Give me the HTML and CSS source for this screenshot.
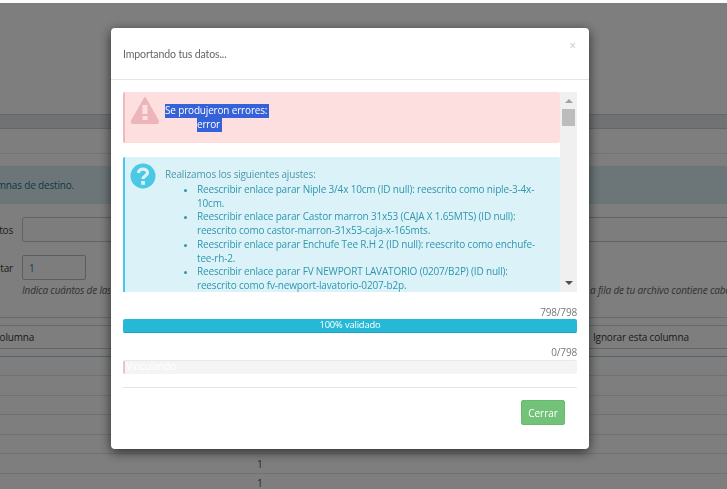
FILE: index.html
```html
<!DOCTYPE html>
<html lang="es">
<head>
<meta charset="utf-8">
<title>Importando tus datos</title>
<link rel="stylesheet" href="styles.css">
</head>
<body>
<main class="page">
  <div class="band"></div>
  <div class="plain"></div>
  <div class="notice"><span class="notice-text">columnas de destino.</span></div>
  <div class="field"><label class="field-label">tos</label><div class="input input-wide"></div></div>
  <div class="field"><label class="field-label">tar</label><div class="input input-small">1</div></div>
  <div class="hint"><em class="hint-left">Indica cuántos de las</em><em class="hint-right">a fila de tu archivo contiene cabeceras</em></div>
  <div class="table-head"><span class="head-left">columna</span><span class="head-right">Ignorar esta columna</span></div>
  <div class="row"></div>
  <div class="row"></div>
  <div class="row"></div>
  <div class="row"></div>
  <div class="row"></div>
  <div class="row row-num"><span>1</span></div>
  <div class="row row-num row-last"><span>1</span></div>
</main>
<div class="overlay">
  <section class="modal">
    <header class="modal-header">
      <h1 class="modal-title">Importando tus datos...</h1>
      <span class="close">×</span>
    </header>
    <div class="modal-body">
      <div class="scroller">
        <div class="messages">
          <div class="alert alert-danger">
            <svg class="icon-warn" width="30" height="28" viewBox="0 0 30 28"><path d="M15 2 L28 25 Q28.500 27 27 27 L3 27 Q1.500 27 2 25 Z" fill="#edb5b9" stroke="#edb5b9" stroke-width="2" stroke-linejoin="round"/><rect x="12.500" y="9" width="5" height="9" fill="#fddfe0"/><rect x="12.500" y="20" width="5" height="4" fill="#fddfe0"/></svg>
            <div class="alert-text">
              <span class="selected">Se produjeron errores:</span>
              <ul class="error-list"><li><span class="selected">error</span></li></ul>
            </div>
          </div>
          <div class="alert alert-info">
            <svg class="icon-help" width="26" height="26" viewBox="0 0 26 26"><circle cx="13" cy="13" r="12.500" fill="#4bc8e6"/><path d="M8.500 10 C8.500 4.800 17.500 5 17.500 9.800 C17.500 13 13 12.800 13 16" fill="none" stroke="#dcf2f9" stroke-width="3.200"/><rect x="11.200" y="18" width="3.800" height="3.800" fill="#dcf2f9"/></svg>
            <div class="alert-text">
              <p class="info-title">Realizamos los siguientes ajustes:</p>
              <ul class="info-list">
                <li>Reescribir enlace parar Niple 3/4x 10cm (ID null): reescrito como niple-3-4x-10cm.</li>
                <li>Reescribir enlace parar Castor marron 31x53 (CAJA X 1.65MTS) (ID null): reescrito como castor-marron-31x53-caja-x-165mts.</li>
                <li>Reescribir enlace parar Enchufe Tee R.H 2 (ID null): reescrito como enchufe-tee-rh-2.</li>
                <li>Reescribir enlace parar FV NEWPORT LAVATORIO (0207/B2P) (ID null): reescrito como fv-newport-lavatorio-0207-b2p.</li>
              </ul>
            </div>
          </div>
        </div>
        <div class="scrollbar">
          <span class="arrow-up"></span>
          <span class="thumb"></span>
          <span class="arrow-down"></span>
        </div>
      </div>
      <div class="count count-first">798/798</div>
      <div class="progress"><div class="progress-fill">100% validado</div></div>
      <div class="count count-second">0/798</div>
      <div class="progress progress-empty"><div class="progress-start"></div><span class="progress-label">Vinculando</span></div>
      <hr class="rule">
      <div class="actions"><button class="btn" type="button">Cerrar</button></div>
    </div>
  </section>
</div>
</body>
</html>
```
FILE: styles.css
```css
* { box-sizing: border-box; }
html, body { margin: 0; height: 100%; overflow: hidden; }
body { background: #fcfcfc; font-family: "Open Sans", sans-serif; font-size: 10px; letter-spacing: -.17px; color: #363a41; }

.page { height: 489px; padding-top: 114px; overflow: hidden; }
.band { height: 15px; background: #e0e5e8; border-top: 1px solid #c8cdd0; border-bottom: 1px solid #c8cdd0; }
.plain { height: 25px; border-bottom: 1px solid #e6e6e6; }
.notice { height: 38px; margin-top: 12px; background: #d9edf3; display: flex; align-items: center; overflow: hidden; }
.notice-text { margin-left: -22px; white-space: nowrap; color: #2a6f85; }
.field { height: 25px; margin-top: 13px; display: flex; overflow: hidden; }
.field-label { width: 22px; flex: none; display: flex; justify-content: flex-end; padding-right: 9px; align-items: center; white-space: nowrap; }
.input { height: 25px; border: 1px solid #c6c6c6; border-radius: 2px; padding: 0 6px; display: flex; align-items: center; background: #fbfbfb; color: #4c6f8a; }
.input-wide { flex: 1; margin-right: -4px; }
.input-small { width: 64px; border-color: #bbb; }
.hint { height: 37px; display: flex; color: #666; white-space: nowrap; overflow: hidden; padding-top: 3px; }
.hint-left { margin-left: 22px; width: 88px; flex: none; overflow: hidden; }
.hint-right { margin-left: 480px; }
.table-head { height: 32px; border-top: 1px solid #d4d4d4; display: flex; align-items: center; border-bottom: 1px solid #c9c9c9; box-shadow: inset 0 7px 0 #fcfcfc, inset 0 8px 0 #d2d2d2; padding-top: 8px; overflow: hidden; }
.head-left { margin-left: -5px; width: 598px; flex: none; }
.head-right { white-space: nowrap; }
.row { height: 19.600px; border-bottom: 1px solid #e2e2e2; }
.table-head + .row { height: 20px; border-top: 1px solid #a4c8dc; margin-top: 7px; }
.row-num { display: flex; align-items: center; padding-left: 257px; color: #1b5f8a; }

.overlay { position: fixed; left: 0; right: 0; top: 3px; bottom: 0; background: rgba(0, 0, 0, .5); padding: 25px 0 0 111px; }
.modal { width: 478px; height: 421px; background: #fff; border-radius: 4px; box-shadow: 0 3px 12px rgba(0, 0, 0, .65); display: flex; flex-direction: column; }
.modal-header { height: 52px; flex: none; border-bottom: 1px solid #e5e5e5; display: flex; justify-content: space-between; padding: 12px 12px 0; }
.modal-title { margin: 0; font-family: Lato, sans-serif; font-size: 10.6px; font-weight: 400; line-height: 29px; color: #666; letter-spacing: -.15px; }
.close { font-size: 12px; font-weight: 700; color: #d8d8d8; line-height: 12px; margin-right: 1px; }
.modal-body { padding: 12px 12px 0; flex: 1; }

.scroller { height: 200px; display: flex; overflow: hidden; }
.messages { width: 437px; flex: none; overflow: hidden; }
.alert { display: flex; border-radius: 2px; }
.alert-danger { height: 51px; background: #fddfe0; border-left: 2px solid #f0b8bc; color: #fff; padding: 4px 0 0 5px; }
.alert-info { height: 160px; margin-top: 14px; background: #dcf2f9; border-left: 2px solid #4ac7e6; color: #2e97ad; padding: 6px 0 0 5px; }
.icon-warn, .icon-help { flex: none; display: block; }
.icon-warn { margin-right: 5px; }
.icon-help { margin-right: 9px; }
.alert-danger .alert-text { padding-top: 8px; line-height: 13.500px; }
.selected { background: #3662d9; color: #fff; display: inline-block; height: 14px; }
.alert-danger .selected:first-child { padding-right: 2px; }
.error-list { list-style: none; margin: 0; padding: 0 0 0 32px; }
.info-title { margin: 0; padding-top: 4px; line-height: 14px; color: #4b98aa; }
.info-list { margin: 0; padding: 2px 16px 0 32px; line-height: 13.700px; }
.info-list li::marker { font-size: 9px; }

.scrollbar { width: 17px; flex: none; background: #f0f0f0; display: flex; flex-direction: column; align-items: center; padding-top: 7px; }
.arrow-up { width: 0; height: 0; border-left: 4px solid transparent; border-right: 4px solid transparent; border-bottom: 4px solid #a3a3a3; }
.thumb { width: 13px; height: 17px; background: #bcbcbc; margin-top: 6px; }
.arrow-down { width: 0; height: 0; border-left: 4px solid transparent; border-right: 4px solid transparent; border-top: 4px solid #505050; margin-top: auto; margin-bottom: 7px; }

.count { text-align: right; color: #777; line-height: 13px; }
.count-first { margin-top: 14px; }
.count-second { margin-top: 13px; }
.progress { height: 14px; border-radius: 2px; overflow: hidden; }
.progress-fill { height: 14px; background: #25b9d7; border-bottom: 1px solid #1ea2bd; color: #fff; text-align: center; line-height: 12px; font-size: 9.4px; }
.progress-empty { display: flex; background: #f4f4f4; border-top: 1px solid #e9e9e9; position: relative; margin-top: 1px; }
.progress-start { width: 2px; background: #f3c1c4; flex: none; }
.progress-label { position: absolute; left: 3px; top: -1px; color: #fff; line-height: 13px; }
.rule { border: 0; border-top: 1px solid #e5e5e5; margin: 13px 0 0; }
.actions { display: flex; justify-content: flex-end; padding: 12px 12px 0 0; }
.btn { width: 44px; height: 25px; padding: 0; background: #72c279; border: 1px solid #67bb6e; border-radius: 2px; color: #fff; font: 400 10px "Open Sans", sans-serif; }
```
